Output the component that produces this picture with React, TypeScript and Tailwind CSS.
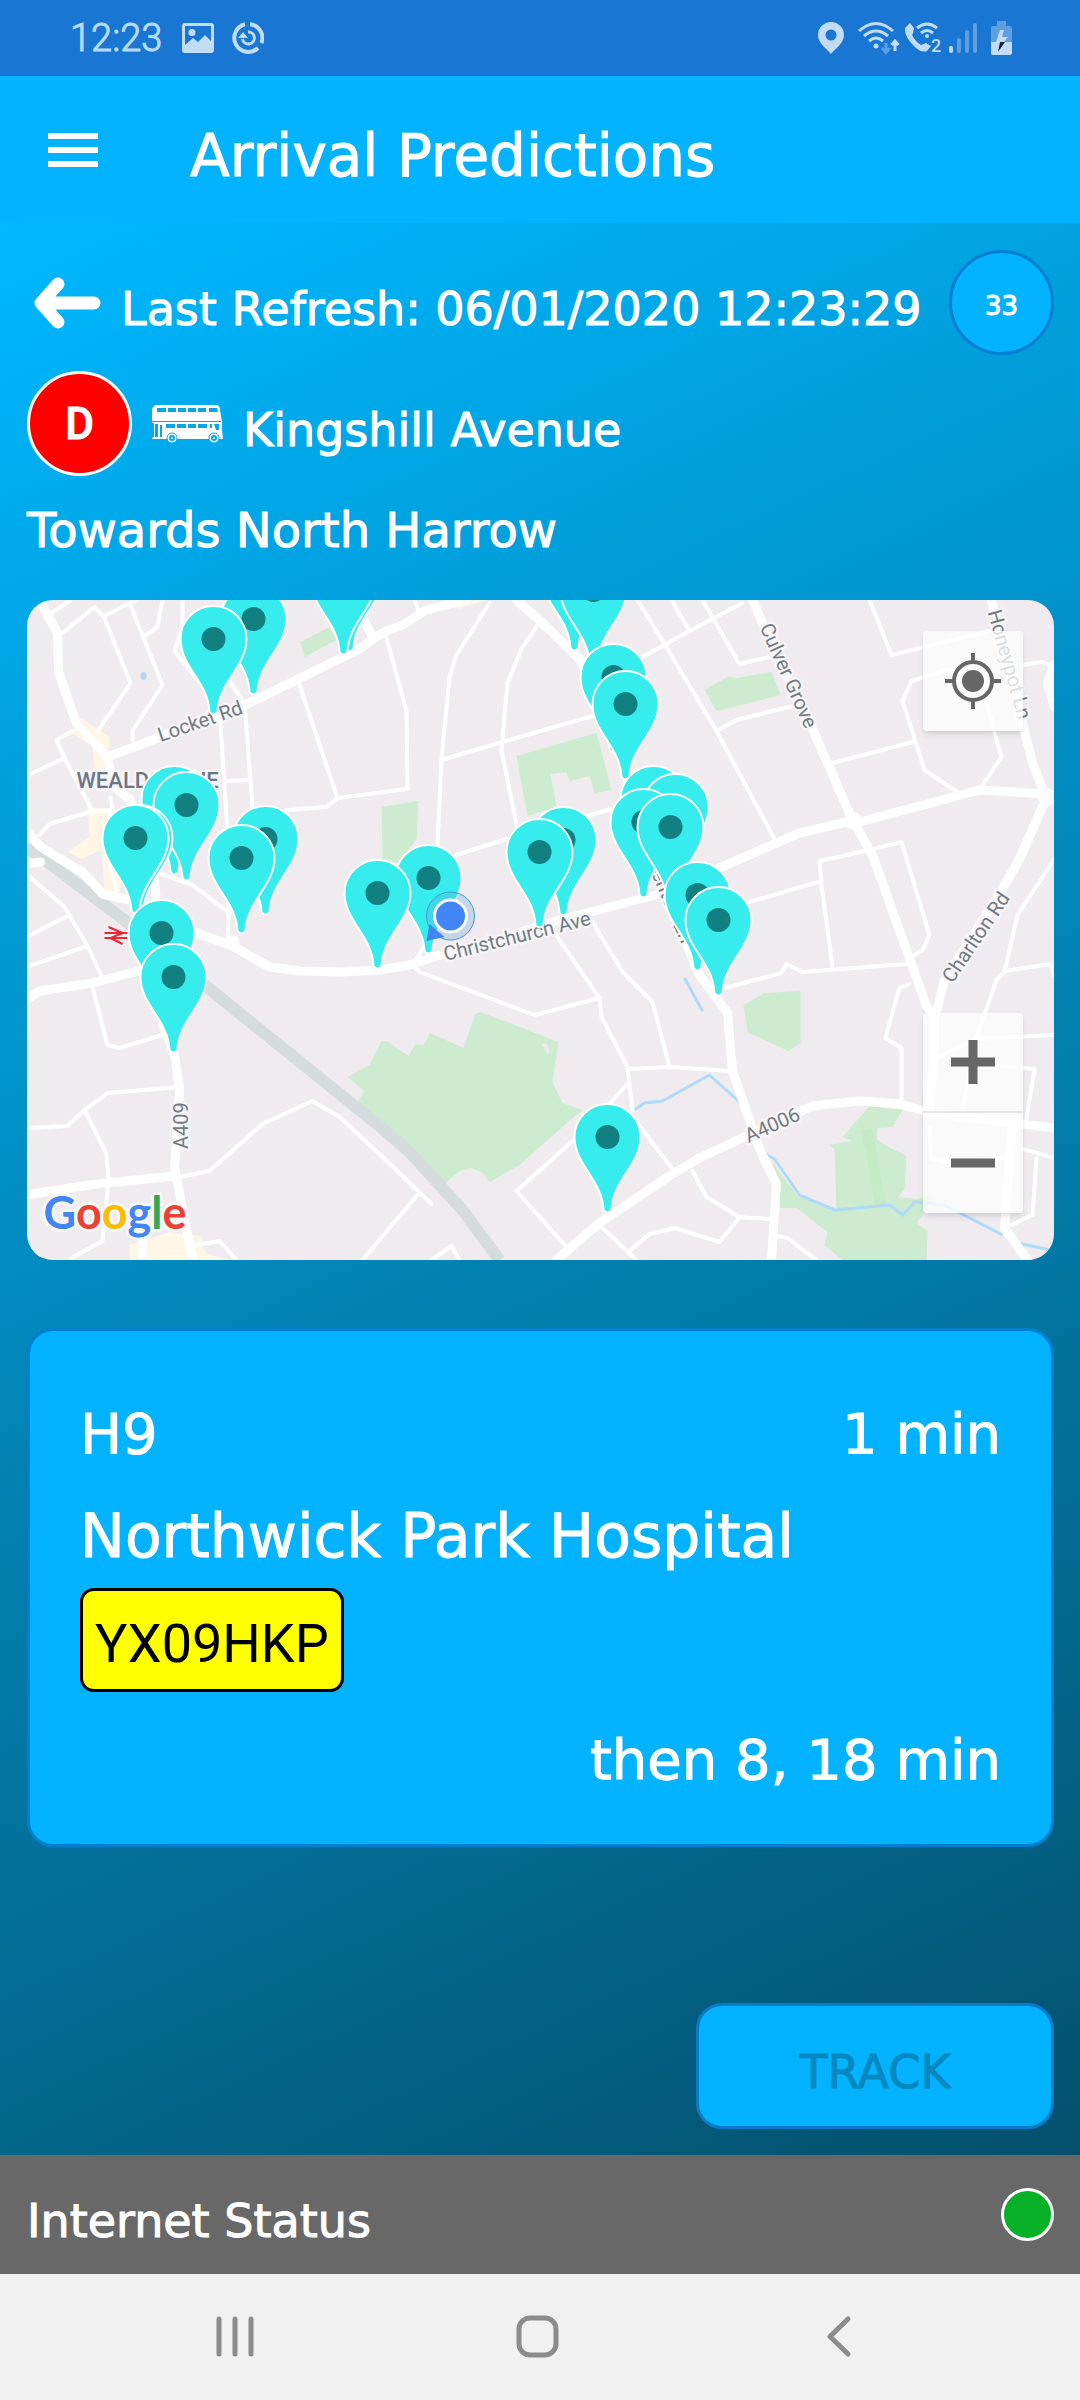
import { type ReactNode } from 'react';

interface Point {
  x: number;
  y: number;
}

interface RoadLabel extends Point {
  text: string;
  angle: number;
}

// centre of each stop marker, furthest back first
const STOPS: Point[] = [
  { x: 323, y: -24 },
  { x: 317, y: -21 },
  { x: 548, y: -25 },
  { x: 567, y: -10 },
  { x: 227, y: 19 },
  { x: 187, y: 39 },
  { x: 587, y: 77 },
  { x: 599, y: 104 },
  { x: 148, y: 199 },
  { x: 160, y: 205 },
  { x: 627, y: 199 },
  { x: 649, y: 207 },
  { x: 617, y: 222 },
  { x: 644, y: 227 },
  { x: 113, y: 238 },
  { x: 109, y: 238 },
  { x: 239, y: 239 },
  { x: 215, y: 258 },
  { x: 537, y: 240 },
  { x: 513, y: 252 },
  { x: 402, y: 278 },
  { x: 351, y: 293 },
  { x: 671, y: 295 },
  { x: 692, y: 320 },
  { x: 135, y: 333 },
  { x: 147, y: 377 },
  { x: 581, y: 537 },
];

const LABELS: RoadLabel[] = [
  { text: 'Locket Rd', x: 134, y: 142, angle: -19 },
  { text: 'Christchurch Ave', x: 419, y: 361, angle: -14 },
  { text: 'Kenton Ln', x: 620, y: 262, angle: 67 },
  { text: 'Culver Grove', x: 733, y: 27, angle: 66 },
  { text: 'Honeypot Ln', x: 961, y: 12, angle: 74 },
  { text: 'Charlton Rd', x: 926, y: 384, angle: -56 },
  { text: 'A4006', x: 722, y: 543, angle: -24 },
  { text: 'A409', x: 161, y: 549, angle: -90 },
];

const PARKS = [
  '274,42 303,27 310,40 278,57',
  '490,156 570,133 585,190 568,193 563,176 543,181 540,172 524,174 530,207 501,216',
  '355,207 392,201 390,239 373,263 356,259',
  '321,477 343,465 355,441 360,441 382,456 389,444 397,445 404,433 437,448 449,414 454,412 532,442 526,482 536,503 556,510 546,518 493,565 463,582 456,573 445,568 433,571 418,584 333,506 331,502 338,491',
  '678,90 701,77 711,78 745,72 754,95 690,111',
  '717,405 738,393 774,391 774,443 762,451 721,432',
  '746,562 753,573 773,597 810,610 808,549 803,545 826,541 816,537 843,506 876,510 866,527 851,528 850,539 858,545 880,556 878,589 871,597 890,599 906,595 900,610 890,623 901,631 900,660 816,660 798,645 801,632 770,608 753,608',
];

const SHOPPING_AREAS = [
  '55,118 83,137 80,181 70,192 66,146 45,133',
  '61,207 103,211 93,294 78,289 75,250 55,259 41,252 63,237',
  '103,645 143,632 173,636 180,654 206,660 103,660',
  '430,6 448,0 462,0 432,9',
];

const MAIN_ROADS = [
  'M13 0 31 33 32 72 50 124 71 146 81 157 86 185 104 200 127 262 130 306',
  'M81 157 126 140 186 116 223 103 333 49 348 38 360 31 376 25 400 10 440 0',
  'M326 0 346 36',
  'M0 231 13 246 30 257 56 272 76 294 103 300 170 333 206 346 243 367 273 371 316 372 353 370 383 365 410 356 466 341 533 320 633 294 693 268 773 233 820 222 833 222 953 190 1020 194 1028 200',
  'M726 0 750 55 786 129 826 220 846 255 900 406 908 415',
  'M910 411 918 380 973 294 993 259 1020 198',
  'M965 0 1006 163 1020 198',
  'M908 411 908 450 903 510',
  'M530 660 573 623 643 576 673 558 720 536 786 506 833 501 873 504 906 513 1028 528',
  'M490 0 513 20 553 59 580 110 600 176 633 272 671 372 701 413 706 471 733 549 750 584 745 660',
  'M136 424 148 454 153 489 148 567 166 660',
  'M0 400 13 391 66 383 116 370 140 368',
  'M0 595 70 584 148 576',
  'M986 523 978 628 1001 660',
  'M1028 64 1021 83 1028 107',
  'M0 264 14 262',
  'M116 640V660',
];

const SIDE_ROADS = [
  'M23 14 43 1',
  'M36 33 68 7 78 18 104 83 70 133',
  'M78 16 103 3 136 85 106 131 106 140',
  'M103 3 110 0',
  'M118 36 131 27 136 0',
  'M156 0 156 27 148 51 193 107 201 233 202 345',
  'M203 81 218 103 226 207',
  'M201 181 223 180',
  'M273 85 311 198 381 189 380 111 360 38',
  'M311 198 300 207 260 210',
  'M0 176 38 158 30 140 46 131',
  'M38 158 65 209',
  'M13 235 23 224 63 212 86 210 84 198',
  'M84 210 80 250 90 290',
  'M0 274 38 307 61 346 75 376',
  'M0 337 43 315',
  'M0 367 61 346',
  'M66 387 81 445 93 448 136 435',
  'M0 528 41 526 58 510 81 493 153 487',
  'M58 510 80 554 82 580 76 641 45 658',
  'M0 647 16 660',
  'M148 578 183 571 236 524 286 501 313 517 353 554 405 604',
  'M391 595 336 660',
  'M405 660 425 646 433 660',
  'M135 274 166 285 203 313',
  'M170 645 193 641 210 660',
  'M463 3 430 55 423 77 415 159 411 246',
  'M415 160 476 142 566 116',
  'M511 25 495 49 481 83 475 150 490 224',
  'M430 255 480 239',
  'M560 216 596 206',
  'M388 0 392 10',
  'M611 0 638 44 690 131 748 239',
  'M616 57 663 31 716 3',
  'M663 31 645 0',
  'M676 0 713 64 743 57',
  'M690 131 710 120 766 106',
  'M806 163 886 142',
  'M843 0 865 55 963 31',
  'M931 192 898 170 876 101 885 81 920 70 958 78',
  'M960 103 975 157 956 185',
  'M975 68 1016 62 1028 68',
  'M806 367 795 285 793 261 843 250 875 242 903 335 896 350 883 358',
  'M723 302 795 281',
  'M698 388 755 373 760 364 776 372 880 364',
  'M883 384 873 388 859 438 875 448 875 502',
  'M601 469 643 467 703 471',
  'M566 322 596 372 626 402 643 467',
  'M526 330 573 398 575 417 601 467 606 510',
  'M573 398 508 415 393 372 383 363',
  'M388 363 398 345',
  'M601 484 583 504',
  'M546 541 490 591 540 647',
  'M606 517 646 569',
  'M666 571 680 597 713 617 745 619',
  'M576 628 610 660',
  'M603 651 623 634 648 628 693 642 713 617',
  'M1028 259 991 315 978 372 970 380 950 437 935 515',
  'M978 371 1024 364 1028 376',
  'M910 458 950 439 1028 435',
  'M960 465 1008 469 1000 519',
  'M903 528 905 558 920 562 976 558',
  'M996 549 1028 558',
  'M1010 558 1006 615 985 625',
  'M751 636 761 638 790 660',
];

const STREAMS = [
  'M738 553 748 559 773 595 808 610 863 605 876 615 888 602 918 605 976 635',
  'M991 643 1028 651',
  'M608 510 618 503 636 501 683 475 713 502',
  'M658 378 676 411',
];

function MapPin({ x, y }: Point) {
  return (
    <g transform={`translate(${x} ${y})`}>
      <path
        d="M-4 73C-5 43-33 28-33 0A33 33 0 0 1 33 0C33 28 5 43 4 73Q0 78-4 73Z"
        fill="#36ecec"
        stroke="#fff"
        strokeWidth="2"
      />
      <circle r="12" fill="#128080" />
    </g>
  );
}

function StreetMap() {
  return (
    <svg viewBox="0 0 1028 660" preserveAspectRatio="xMidYMid slice" className="block h-full w-full" aria-label="Map of nearby stops">
      <rect width="1028" height="660" fill="#efebef" />
      <g fill="#fff6e6">
        {SHOPPING_AREAS.map(points => <polygon key={points} points={points} />)}
      </g>
      <g fill="#cdebce">
        {PARKS.map(points => <polygon key={points} points={points} />)}
      </g>
      <polygon points="835,530 846,528 854,575 860,606 849,606" fill="#c5eac7" />
      <path d="M515 444l5-1 3 8-1 4z" fill="#efebef" />
      <ellipse cx="117" cy="76" rx="3" ry="4" fill="#b3d7fb" />
      <g fill="none" stroke="#b0dafa" strokeWidth="3" strokeLinejoin="round">
        {STREAMS.map(d => <path key={d} d={d} />)}
      </g>
      <path d="M0 248 16 258 103 324 183 389 353 526 383 552 436 610 473 660" fill="none" stroke="#d6dbde" strokeWidth="12" />
      <g fill="none" stroke="#fff" strokeLinejoin="round" strokeLinecap="round">
        <g strokeWidth="4">{SIDE_ROADS.map(d => <path key={d} d={d} />)}</g>
        <g strokeWidth="9">{MAIN_ROADS.map(d => <path key={d} d={d} />)}</g>
      </g>
      <circle cx="206" cy="342" r="7" fill="#fff" />
      <circle cx="827" cy="221" r="9" fill="#fff" />
      <circle cx="1020" cy="197" r="9" fill="#fff" />

      <g fontFamily="Roboto, sans-serif" fill="#727c80" stroke="#f6f4f6" strokeWidth="5" strokeLinejoin="round" paintOrder="stroke">
        {LABELS.map(l => (
          <text key={l.text} transform={`translate(${l.x} ${l.y}) rotate(${l.angle})`} fontSize="20">{l.text}</text>
        ))}
        <text x="50" y="188" fontSize="22" fontWeight="500" fill="#6b7785">WEALDSTONE</text>
      </g>

      {/* rail station */}
      <path d="M78 333H101M78 338H101M82 327L96 333L84 338L96 344" fill="none" stroke="#ee2433" strokeWidth="2" />

      {STOPS.map(s => <MapPin key={`${s.x}-${s.y}`} x={s.x} y={s.y} />)}

      {/* current position */}
      <circle cx="424" cy="316" r="24" fill="#6aa3d8" fillOpacity="0.3" stroke="#3b9fd8" strokeWidth="1" />
      <path d="M403 324L418 337L400 341Z" fill="#4285f4" />
      <circle cx="424" cy="316" r="16" fill="#4285f4" stroke="#fff" strokeWidth="3" />

      <text x="17" y="629" fontFamily="Lato, sans-serif" fontSize="45" fontWeight="700" stroke="#f8f7f8" strokeWidth="6" strokeLinejoin="round" paintOrder="stroke">
        <tspan fill="#4285f4">G</tspan>
        <tspan fill="#ea4335">o</tspan>
        <tspan fill="#fbbc05">o</tspan>
        <tspan fill="#4285f4">g</tspan>
        <tspan fill="#34a853">l</tspan>
        <tspan fill="#ea4335">e</tspan>
      </text>
    </svg>
  );
}

function MapButton({ label, children }: { label: string; children: ReactNode }) {
  return (
    <button aria-label={label} className="flex h-[100px] w-[100px] items-center justify-center">
      {children}
    </button>
  );
}

function StatusBar() {
  return (
    <div className="flex h-[76px] shrink-0 items-center bg-[#1976d2] pl-[70px] pr-[68px] text-[#c3dcf5]">
      <span className="font-[Roboto,sans-serif] text-[38px] font-light leading-[76px] text-[#b9dbfb]">12:23</span>
      <svg width="32" height="32" viewBox="0 0 32 32" fill="currentColor" className="ml-5">
        <path fillRule="evenodd" d="M3 1H29Q32 1 32 4V28Q32 31 29 31H3Q0 31 0 28V4Q0 1 3 1ZM3 4V23L11 16L16 20L23 13L29 19V4ZM10 7A3 3 0 1 1 10 14A3 3 0 1 1 10 7Z" />
      </svg>
      <svg width="32" height="32" viewBox="0 0 32 32" fill="none" stroke="currentColor" strokeWidth="4" className="ml-[18px]">
        <path d="M13 2.3A14 14 0 1 0 26 26" />
        <path d="M18 2.2A14 14 0 0 1 29.5 21" />
        <path d="M16 10A6 6 0 1 1 10.500 17" strokeWidth="3" />
        <path d="M6 16L11 10L16 16Z" fill="currentColor" stroke="none" />
      </svg>

      <svg width="26" height="32" viewBox="0 0 26 32" fill="currentColor" className="ml-auto">
        <path fillRule="evenodd" d="M13 0A13 13 0 0 1 26 13C26 21 17 27 13 32C9 27 0 21 0 13A13 13 0 0 1 13 0ZM13 7.500A5.500 5.500 0 1 0 13 18.500A5.500 5.500 0 1 0 13 7.500Z" />
      </svg>
      <svg width="42" height="34" viewBox="0 0 42 34" fill="none" stroke="currentColor" strokeWidth="3" className="ml-[14px]">
        <path d="M1 10Q18-5 35 10M6 15Q18 5 30 15M11 20Q18 14 25 20" />
        <circle cx="18" cy="25" r="2.500" fill="currentColor" stroke="none" />
        <path d="M28 22V31M24 27L28 31.500L32 27" stroke="#5d9fe0" />
        <path d="M37 30V20M33.500 24L37 20L40.500 24" />
      </svg>
      <svg width="38" height="34" viewBox="0 0 38 34" fill="none" stroke="currentColor" className="ml-1">
        <path d="M6 2L10 7L9 12L8 14Q11 20 17 24L22 22L27 25L23 30Q18 32 12 27Q0 16 1 7Z" fill="currentColor" stroke="none" />
        <path d="M13 7Q23-1 33 7M17 12Q23 7 29 12" strokeWidth="3" />
        <circle cx="23" cy="15" r="2" fill="currentColor" stroke="none" />
        <text x="27" y="31" fontFamily="Roboto, sans-serif" fontSize="18" fontWeight="500" fill="currentColor" stroke="none">2</text>
      </svg>
      <svg width="28" height="32" viewBox="0 0 28 32" fill="none" strokeWidth="4" strokeLinecap="round" stroke="#5d9fe0" className="ml-[7px]">
        <path d="M2 26V29" stroke="#c3dcf5" />
        <path d="M10 18V29M18 10V29M26 3V29" />
      </svg>
      <svg width="21" height="34" viewBox="0 0 21 34" className="ml-[14px]">
        <path d="M6 0H15V5H19Q21 5 21 7V21H0V7Q0 5 2 5H6Z" fill="#5d9fe0" />
        <path d="M0 21H21V32Q21 34 19 34H2Q0 34 0 32Z" fill="#c3dcf5" />
        <path d="M9 9H13L11 16H17L13 21H5Z" fill="#c3dcf5" />
        <path d="M9 21H14L7 31Z" fill="#12283f" />
      </svg>
    </div>
  );
}

function BusIcon() {
  return (
    <svg width="71" height="38" viewBox="0 0 71 38" className="ml-5 shrink-0" aria-hidden="true">
      <path d="M4 0H65Q68 1 68 5L70 17V25L71 34H0V33L2 32V18H0V6Q0 1 4 0Z" fill="#fff" />
      <g fill="#04a8e8">
        <path d="M5 3H14V7H5ZM16 3H24V7H16ZM26 3H34V7H26ZM36 3H44V7H36ZM46 3H54V7H46ZM57 3H65L66 7H57Z" />
        <path d="M0 16H69V17H0Z" />
        <path d="M14 19H23V23H14ZM25 19H34V23H25ZM36 19H44V23H36ZM46 19H55V23H46ZM58 19H60V23H58ZM62 19H67V25H64Z" />
        <path d="M3 19H6V32H3ZM8 20H10V32H8Z" />
      </g>
      {[20, 62].map(cx => (
        <g key={cx} fill="#fff" stroke="#04a8e8">
          <circle cx={cx} cy="33" r="5" />
          <circle cx={cx} cy="33" r="2" strokeWidth="2" />
        </g>
      ))}
    </svg>
  );
}

function NavButton({ label, children }: { label: string; children: ReactNode }) {
  return (
    <button aria-label={label} className="flex h-full w-[302px] items-center justify-center">
      <svg width="44" height="44" viewBox="0 0 44 44" fill="none" stroke="#8c8c8c" strokeWidth="5" strokeLinecap="round" strokeLinejoin="round">
        {children}
      </svg>
    </button>
  );
}

export default function App() {
  return (
    <div className="flex min-h-screen flex-col font-['DejaVu_Sans',sans-serif] text-[46px] text-white [-webkit-text-stroke-width:1px]">
      <StatusBar />

      <header className="flex h-[147px] shrink-0 items-center bg-[#03b3ff] pl-12">
        <button aria-label="Menu" className="flex w-[50px] flex-col gap-2">
          <span className="h-1.5 bg-white" />
          <span className="h-1.5 bg-white" />
          <span className="h-1.5 bg-white" />
        </button>
        <h1 className="ml-[92px] whitespace-nowrap pt-3 text-[58px] leading-[64px]">Arrival Predictions</h1>
      </header>

      <main className="flex grow flex-col bg-[linear-gradient(155deg,#00b8ff,#04506c)] pb-[26px] pl-[27px] pr-[26px] pt-[27px]">
        <div className="flex items-center">
          <button aria-label="Back" className="ml-1.5 shrink-0">
            <svg width="68" height="54" viewBox="0 0 68 54" fill="none" stroke="#fff" strokeWidth="13" strokeLinecap="round" strokeLinejoin="round">
              <path d="M61 27H12M25 8L8 27L25 46" />
            </svg>
          </button>
          <p className="ml-5 whitespace-nowrap pt-3 leading-[60px]">Last Refresh: 06/01/2020 12:23:29</p>
          <div className="ml-auto flex h-[105px] w-[105px] shrink-0 items-center justify-center rounded-full border-3 border-[#007fd0] bg-[#03b3ff] pt-2 text-[26px]">
            33
          </div>
        </div>

        <div className="mt-4 flex items-center">
          <div className="flex h-[105px] w-[105px] shrink-0 items-center justify-center rounded-full border-3 border-white bg-[#ff0000] font-[Roboto,sans-serif] text-[44px] font-medium">
            D
          </div>
          <BusIcon />
          <h2 className="ml-5 whitespace-nowrap pt-3 leading-[60px]">Kingshill Avenue</h2>
        </div>

        <p className="mb-10 mt-6 text-[48px] leading-[60px]">Towards North Harrow</p>

        <div className="relative h-[660px] overflow-hidden rounded-[26px]">
          <StreetMap />
          <div className="absolute right-[31px] top-[31px] rounded-sm bg-white/75 shadow-md">
            <MapButton label="My location">
              <svg width="56" height="56" viewBox="0 0 56 56" fill="none" stroke="#666" strokeWidth="4">
                <circle cx="28" cy="28" r="19" />
                <circle cx="28" cy="28" r="11" fill="#666" stroke="none" />
                <path d="M28 0V8M28 48V56M0 28H8M48 28H56" />
              </svg>
            </MapButton>
          </div>
          <div className="absolute bottom-[47px] right-[31px] divide-y-2 divide-[#e6e6e6] rounded-sm bg-white/75 shadow-md">
            <MapButton label="Zoom in">
              <svg width="44" height="44" viewBox="0 0 44 44" stroke="#666" strokeWidth="9">
                <path d="M22 0V44M0 22H44" />
              </svg>
            </MapButton>
            <MapButton label="Zoom out">
              <svg width="44" height="44" viewBox="0 0 44 44" stroke="#666" strokeWidth="9">
                <path d="M0 22H44" />
              </svg>
            </MapButton>
          </div>
        </div>

        <section className="mt-[68px] rounded-[26px] border-3 border-[#007fd0] bg-[#03b3ff] px-[50px] pb-11 pt-[63px] text-[56px] leading-[80px]">
          <div className="flex justify-between">
            <span>H9</span>
            <span>1 min</span>
          </div>
          <p className="mt-[22px] text-[60px]">Northwick Park Hospital</p>
          <div className="mt-3 flex">
            <span className="flex h-[104px] items-center rounded-[14px] border-3 border-black bg-[#ffff00] px-3 pt-2 font-[Roboto,sans-serif] text-[54px] text-black [-webkit-text-stroke-width:0px]">
              YX09HKP
            </span>
          </div>
          <p className="mt-7 text-right">then 8, 18 min</p>
        </section>

        <div className="mt-auto flex justify-end">
          <button disabled className="h-[126px] w-[358px] rounded-[26px] border-3 border-[#0a7bc8] bg-[#03b3ff] pt-3 text-[#0388bf]">
            TRACK
          </button>
        </div>
      </main>

      <footer className="flex h-[119px] shrink-0 items-center justify-between bg-[#686868] pl-[27px] pr-[26px]">
        <span className="pt-3 leading-[60px]">Internet Status</span>
        <span className="h-[53px] w-[53px] rounded-full border-3 border-white bg-[#07b026]" />
      </footer>

      <nav className="flex h-[126px] shrink-0 justify-center bg-[#f1f1f1] pr-1.5">
        <NavButton label="Recent apps">
          <path d="M6 4V39M22 4V39M38 4V39" />
        </NavButton>
        <NavButton label="Home">
          <rect x="4" y="3" width="37" height="37" rx="11" />
        </NavButton>
        <NavButton label="Back">
          <path d="M31 4L13 21.500L31 39" />
        </NavButton>
      </nav>
    </div>
  );
}
